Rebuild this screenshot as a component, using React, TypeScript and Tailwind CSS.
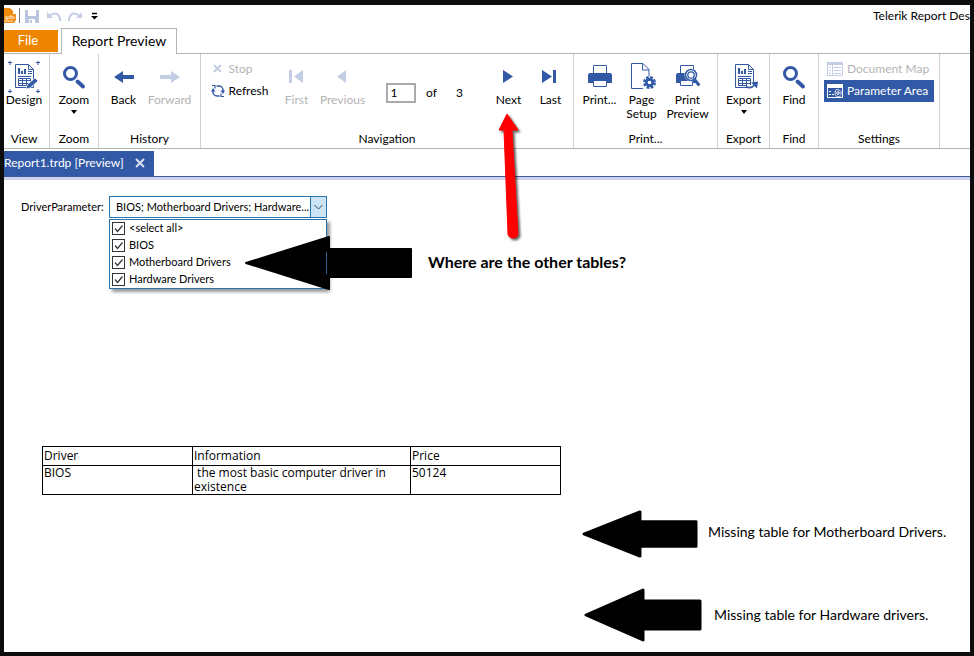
import React from "react";
import clsx from "clsx";

const BLUE = "#3259a6";
const PALE = "#c3cde3";

const PARAMETER_VALUES = ["<select all>", "BIOS", "Motherboard Drivers", "Hardware Drivers"];

function PageGrid() {
  return (
    <>
      <path d="M7.500 3.500h13l5 5v18h-18z" fill="#fff" stroke={BLUE} />
      <path d="M20.500 3.500v5h5" fill="none" stroke={BLUE} />
      <path d="M10 7h2v6h-2zM13 10h2v3h-2zM16 8h2v5h-2z" fill={BLUE} />
      <path d="M20 10.500h4M20 12.500h4M10 15.500h13" stroke={BLUE} />
      <path d="M10.500 17.500h12v7h-12zM10.500 19.500h12M10.500 22.500h12M14.500 17.500v7M18.500 17.500v7" fill="none" stroke={BLUE} />
    </>
  );
}

function DesignIcon() {
  return (
    <svg width="32" height="32" viewBox="0 0 32 32">
      <PageGrid />
      <path d="M0 1.500h4M2 0v4M28 1.500h4M30 0v4M0 30.500h4M2 28v4M28 30.500h4M30 28v4" stroke={BLUE} />
      <path d="M18 28l1-4 8-7 3 3-8 7z" fill={BLUE} stroke="#fff" strokeWidth=".7" />
    </svg>
  );
}

function ExportIcon() {
  return (
    <svg width="32" height="32" viewBox="0 0 32 32">
      <PageGrid />
      <path d="M19 24h9v6h-9z" fill="#fff" />
      <path d="M18 25.500q5 3 9-2" fill="none" stroke={BLUE} strokeWidth="1.500" />
      <path d="M23 21.500l7-1-1 7z" fill={BLUE} />
    </svg>
  );
}

function SearchIcon() {
  return (
    <svg width="32" height="32" viewBox="0 0 32 32">
      <circle cx="12.500" cy="12.500" r="6" fill="none" stroke={BLUE} strokeWidth="3" />
      <path d="M19.500 20.500l5.500 5" stroke={BLUE} strokeWidth="4" strokeLinecap="round" />
    </svg>
  );
}

function ArrowIcon({ flip = false }: { flip?: boolean }) {
  return (
    <svg width="32" height="32" viewBox="0 0 32 32">
      <path
        d={flip ? "M26 16l-9-6v4H6v4h11v4z" : "M6 16l9-6v4h11v4H15v4z"}
        fill={flip ? PALE : BLUE}
      />
    </svg>
  );
}

function StepIcon({ kind }: { kind: "first" | "previous" | "next" | "last" }) {
  return (
    <svg width="32" height="32" viewBox="0 0 32 32">
      {kind === "first" && <path d="M8 9h3v13H8zM22 9v13l-9-6.500z" fill={PALE} />}
      {kind === "previous" && <path d="M19 9v13l-9-6.500z" fill={PALE} />}
      {kind === "next" && <path d="M10 9v13l10-6.500z" fill={BLUE} />}
      {kind === "last" && <path d="M7 9v13l10-6.500zM18 9h3v13h-3z" fill={BLUE} />}
    </svg>
  );
}

function PrintIcon() {
  return (
    <svg width="32" height="32" viewBox="0 0 32 32">
      <path d="M9.500 4.500h13v9h-13z" fill="#fff" stroke={BLUE} />
      <path d="M6 12h20q2 0 2 2v8H4v-8q0-2 2-2z" fill={BLUE} />
      <path d="M9.500 19.500h13v6h-13z" fill="#fff" stroke={BLUE} />
    </svg>
  );
}

function PageSetupIcon() {
  return (
    <svg width="32" height="32" viewBox="0 0 32 32">
      <path d="M17 27.500H5.500v-25H17l6 6V15M16.500 3v6H23" fill="none" stroke={BLUE} />
      <circle cx="23.500" cy="21.500" r="4.500" fill={BLUE} />
      <circle cx="23.500" cy="21.500" r="5.200" fill="none" stroke={BLUE} strokeWidth="2.500" strokeDasharray="2.700 1.384" />
      <circle cx="23.500" cy="21.500" r="1.800" fill="#fff" />
    </svg>
  );
}

function PrintPreviewIcon() {
  return (
    <svg width="32" height="32" viewBox="0 0 32 32">
      <path d="M8.500 4.500h13v9h-13z" fill="#fff" stroke={BLUE} />
      <path d="M6 12h18v10H4v-8q0-2 2-2z" fill={BLUE} />
      <path d="M8.500 19.500h12v5h-12z" fill="#fff" stroke={BLUE} />
      <circle cx="19" cy="14" r="6.500" fill="#fff" />
      <circle cx="19" cy="14" r="5.500" fill="#fff" stroke={BLUE} strokeWidth="1.500" />
      <circle cx="19" cy="14" r="3.200" fill="none" stroke={BLUE} strokeWidth="1.300" />
      <path d="M22.500 18.500l4 5" stroke={BLUE} strokeWidth="3" strokeLinecap="round" />
    </svg>
  );
}

function RefreshIcon() {
  return (
    <svg width="14" height="14" viewBox="0 0 14 14" fill="none" stroke={BLUE} strokeWidth="1.500">
      <path d="M5.500 2H8a4 4 0 0 1 4 4v1.500M8.500 12H6a4 4 0 0 1-4-4V6.500" />
      <path d="M9.500 6.500H14L12 10zM0 7.500h4.500L2 4z" fill={BLUE} stroke="none" />
      <path d="M1 1.500h3v3M13 12.500h-3v-3" strokeWidth="1.200" />
    </svg>
  );
}

function Caret() {
  return (
    <svg width="6" height="4" viewBox="0 0 6 4" className="mt-[3px]">
      <path d="M0 0h6L3 4z" fill="#000" />
    </svg>
  );
}

interface RibbonButtonProps {
  icon: React.ReactNode;
  label: React.ReactNode;
  wide?: boolean;
  disabled?: boolean;
  caret?: boolean;
}

function RibbonButton({ icon, label, wide, disabled, caret }: RibbonButtonProps) {
  return (
    <button
      type="button"
      disabled={disabled}
      className={clsx(
        "flex flex-col items-center shrink-0 pt-[7px] text-center leading-[14px] whitespace-nowrap",
        wide ? "w-[50px]" : "w-[42px]",
        disabled ? "text-[#b4b4b4]" : "text-black"
      )}
    >
      {icon}
      <span>{label}</span>
      {caret && <Caret />}
    </button>
  );
}

function RibbonGroup({ title, className, children }: { title: string; className: string; children: React.ReactNode }) {
  return (
    <section className={clsx("flex flex-col shrink-0 border-r border-[#d0d0d0]", className)}>
      <div className="flex flex-1 justify-center">{children}</div>
      <h2 className="text-center leading-[18px]">{title}</h2>
    </section>
  );
}

function BlackArrow({ className }: { className: string }) {
  return (
    <svg viewBox="0 0 118 54" preserveAspectRatio="none" className={clsx("absolute", className)}>
      <path d="M2 27L59 2v11h57v28H59v11z" fill="#000" stroke="#000" strokeWidth="3" strokeLinejoin="round" />
    </svg>
  );
}

function Annotations() {
  return (
    <div className="absolute inset-0 pointer-events-none text-[14px] leading-[18px] whitespace-nowrap">
      <svg width="167" height="54" viewBox="0 0 167 54" className="absolute left-[245px] top-[236px]">
        <path d="M1 27L84 1v12h82v28H84v12z" fill="#000" stroke="#000" strokeWidth="2" strokeLinejoin="round" />
        <path d="M81.500 16v22" stroke="#2a5f96" />
      </svg>
      <p className="absolute left-[428px] top-[253px] text-[16px] font-bold">Where are the other tables?</p>

      <svg width="32" height="136" viewBox="0 0 32 136" className="absolute left-[494px] top-[110px] drop-shadow-[2px_2px_1px_rgba(0,0,0,0.6)]">
        <path d="M13 4L5 20h5l4 104a5 4 0 0 0 10 0L18 20h6z" fill="#f00" stroke="#f00" strokeLinejoin="round" />
      </svg>

      <BlackArrow className="left-[582px] top-[510px] h-[48px] w-[116px]" />
      <p className="absolute left-[708px] top-[523px]">Missing table for Motherboard Drivers.</p>
      <BlackArrow className="left-[584px] top-[588px] h-[54px] w-[118px]" />
      <p className="absolute left-[714px] top-[606px]">Missing table for Hardware drivers.</p>
    </div>
  );
}

function TitleBar() {
  return (
    <header className="flex h-[21px] items-center">
      <svg width="100" height="22" viewBox="0 0 100 22" className="shrink-0">
        <path d="M0 3h6l3 3v4H0z" fill="#ee8a0c" />
        <path d="M0 9h12v6l-2 3H0z" fill="#f08c13" />
        <path d="M2 11v3h2v-3M6 14v-3h2v3M10 11v3M0 16h9" fill="none" stroke="#fff" strokeWidth=".8" />
        <path d="M15.500 3v15" stroke="#777" />
        <path d="M21 5h14v13H21z" fill="#b9c5dd" />
        <path d="M24 5h8v6h-8zM25 14h6v4h-6z" fill="#fff" />
        <path d="M26 15h2v3h-2z" fill="#b9c5dd" />
        <path d="M43 7v6h6zM78 7v6h-6z" fill={PALE} />
        <path d="M45 11q9-6 11 3v2M76 11q-9-6-11 3v2" fill="none" stroke={PALE} strokeWidth="2" />
        <path d="M88 8.500h5" stroke="#000" strokeWidth="1.500" />
        <path d="M87 11h7l-3.500 3.500z" fill="#000" />
      </svg>
      <h1 className="ml-auto w-[97px] overflow-hidden text-[12px] leading-[20px] whitespace-nowrap">Telerik Report Des</h1>
    </header>
  );
}

function Ribbon() {
  return (
    <div className="flex h-[96px] overflow-hidden border-y border-[#b4b4b4] text-[12px]">
      <RibbonGroup title="View" className="w-[46px] pr-[5px]">
        <RibbonButton icon={<DesignIcon />} label="Design" />
      </RibbonGroup>
      <RibbonGroup title="Zoom" className="w-[49px]">
        <RibbonButton icon={<SearchIcon />} label="Zoom" caret />
      </RibbonGroup>
      <RibbonGroup title="History" className="w-[102px]">
        <div className="flex pr-[2px]">
          <RibbonButton icon={<ArrowIcon />} label="Back" />
          <RibbonButton icon={<ArrowIcon flip />} label="Forward" wide disabled />
        </div>
      </RibbonGroup>
      <RibbonGroup title="Navigation" className="w-[373px]">
        <div className="flex w-[73px] flex-col pt-1 pl-2 leading-[22px]">
          <button type="button" disabled className="flex items-center gap-1 text-[#b4b4b4]">
            <svg width="14" height="14" viewBox="0 0 14 14">
              <path d="M3 3l7 7M10 3l-7 7" stroke={PALE} strokeWidth="2" />
            </svg>
            Stop
          </button>
          <button type="button" className="flex items-center gap-1">
            <RefreshIcon />
            Refresh
          </button>
        </div>
        <RibbonButton icon={<StepIcon kind="first" />} label="First" disabled />
        <RibbonButton icon={<StepIcon kind="previous" />} label="Previous" wide disabled />
        <div className="flex items-center pt-px pl-[18px]">
          <input
            aria-label="Page number"
            defaultValue="1"
            className="h-[20px] w-[30px] border-2 border-[#ababab] bg-white px-[3px] outline-none"
          />
          <span className="w-[32px] text-center">of</span>
          <span className="w-[24px] text-center">3</span>
        </div>
        <div className="flex pl-4">
          <RibbonButton icon={<StepIcon kind="next" />} label="Next" />
          <RibbonButton icon={<StepIcon kind="last" />} label="Last" />
        </div>
      </RibbonGroup>
      <RibbonGroup title="Print..." className="w-[144px]">
        <RibbonButton icon={<PrintIcon />} label="Print..." />
        <RibbonButton icon={<PageSetupIcon />} label={<>Page<br />Setup</>} />
        <RibbonButton icon={<PrintPreviewIcon />} label={<>Print<br />Preview</>} wide />
      </RibbonGroup>
      <RibbonGroup title="Export" className="w-[52px]">
        <RibbonButton icon={<ExportIcon />} label="Export" caret />
      </RibbonGroup>
      <RibbonGroup title="Find" className="w-[49px]">
        <RibbonButton icon={<SearchIcon />} label="Find" />
      </RibbonGroup>
      <RibbonGroup title="Settings" className="w-[121px]">
        <div className="flex flex-col pt-1 leading-[22px] whitespace-nowrap">
          <button type="button" disabled className="flex w-[110px] items-center gap-1 px-[3px] text-[#b4b4b4]">
            <svg width="16" height="14" viewBox="0 0 16 14">
              <path d="M.5 .5h15v13H.5zM5.500 3v10" fill="none" stroke={PALE} />
              <path d="M0 0h16v3H0z" fill={PALE} />
              <path d="M2 5.500h2M2 8.500h2M2 11.500h2M7 5.500h7M7 8.500h7M7 11.500h7" stroke={PALE} />
            </svg>
            Document Map
          </button>
          <button type="button" className="flex w-[110px] items-center gap-1 bg-[#3259a6] px-[3px] text-white">
            <svg width="16" height="14" viewBox="0 0 16 14">
              <path d="M.5 .5h15v13H.5z" fill="none" stroke="#fff" />
              <path d="M0 0h16v4H0z" fill="#fff" />
              <path d="M2 7.500h2M2 10.500h2M5 10.500h2" stroke="#fff" />
              <circle cx="11" cy="9" r="1.300" fill="none" stroke="#fff" />
              <path d="M14 12q-6 2-6-3t4-3 2 4h-1" fill="none" stroke="#fff" strokeWidth=".8" />
            </svg>
            Parameter Area
          </button>
        </div>
      </RibbonGroup>
    </div>
  );
}

function ParameterArea() {
  return (
    <div className="flex items-center pt-[15px] pl-[17px] text-[11px]">
      <label htmlFor="driver" className="w-[88px] whitespace-nowrap">DriverParameter:</label>
      <div className="relative h-[22px] w-[218px]">
        <select
          id="driver"
          className="h-full w-full appearance-none border border-[#2a74ad] bg-white pr-4 pl-[6px] outline-none"
        >
          <option>BIOS; Motherboard Drivers; Hardware...</option>
        </select>
        <span className="pointer-events-none absolute top-0 right-0 flex h-full w-[17px] items-center justify-center border border-[#2a74ad] bg-[#cce4f7]">
          <svg width="9" height="6" viewBox="0 0 9 6">
            <path d="M.5 1l4 4 4-4" fill="none" stroke="#444" />
          </svg>
        </span>
        <ul className="absolute top-full right-0 left-0 mt-px border border-[#2a74ad] bg-white shadow-[3px_3px_3px_rgba(0,0,0,0.4)]">
          {PARAMETER_VALUES.map(value => (
            <li key={value}>
              <label className="flex h-[17px] items-center gap-1 pl-[2px]">
                <span className="relative flex">
                  <input
                    type="checkbox"
                    defaultChecked
                    className="peer h-[13px] w-[13px] appearance-none border border-[#333] bg-white"
                  />
                  <svg viewBox="0 0 13 13" className="pointer-events-none invisible absolute inset-0 peer-checked:visible">
                    <path d="M3 6.500l2.500 3 5-6" fill="none" stroke="#333" strokeWidth="1.200" />
                  </svg>
                </span>
                {value}
              </label>
            </li>
          ))}
        </ul>
      </div>
    </div>
  );
}

function ReportTable() {
  return (
    <table className="mt-[228px] ml-[38px] w-[519px] table-fixed border-collapse text-left font-['Open_Sans',sans-serif] text-[12px] leading-[14px] [&_td]:border [&_td]:border-black [&_td]:px-px [&_td]:align-top [&_th]:border [&_th]:border-black [&_th]:px-px [&_th]:font-normal">
      <thead>
        <tr className="h-[19px]">
          <th className="w-[150px]">Driver</th>
          <th className="w-[218px]">Information</th>
          <th>Price</th>
        </tr>
      </thead>
      <tbody>
        <tr>
          <td>BIOS</td>
          <td>&nbsp;the most basic computer driver in existence</td>
          <td>50124</td>
        </tr>
      </tbody>
    </table>
  );
}

export default function App() {
  return (
    <div className="relative flex min-h-screen flex-col overflow-hidden border-4 border-t-[5px] border-[#0d0d0d] bg-white font-['Lato',sans-serif] text-black">
      <TitleBar />
      <nav className="flex items-start pt-[2px]">
        <button type="button" className="mt-[2px] h-[22px] w-[54px] bg-[#ee8500] pr-[6px] text-[13px] text-white">File</button>
        <button type="button" className="relative z-10 ml-[3px] -mb-px h-[26px] w-[116px] border border-b-0 border-[#b4b4b4] bg-white pb-[2px] text-[14px]">
          Report Preview
        </button>
      </nav>
      <Ribbon />
      <div className="mt-[2px] flex border-b border-[#3d5a9c]">
        <button type="button" className="flex h-[25px] w-[150px] items-center justify-between bg-[#3259a6] pr-[9px] pb-[2px] text-[12px] text-white">
          Report1.trdp [Preview]
          <svg width="10" height="10" viewBox="0 0 10 10">
            <path d="M1 1l8 8M9 1L1 9" stroke="#d9e2f2" strokeWidth="2" />
          </svg>
        </button>
      </div>
      <main className="flex-1 border-t-[3px] border-[#ccd3ea] pt-px">
        <ParameterArea />
        <ReportTable />
      </main>
      {/* the layer starts inside the frame, so pull it back over the border */}
      <div className="absolute -top-[5px] -left-1">
        <Annotations />
      </div>
    </div>
  );
}
